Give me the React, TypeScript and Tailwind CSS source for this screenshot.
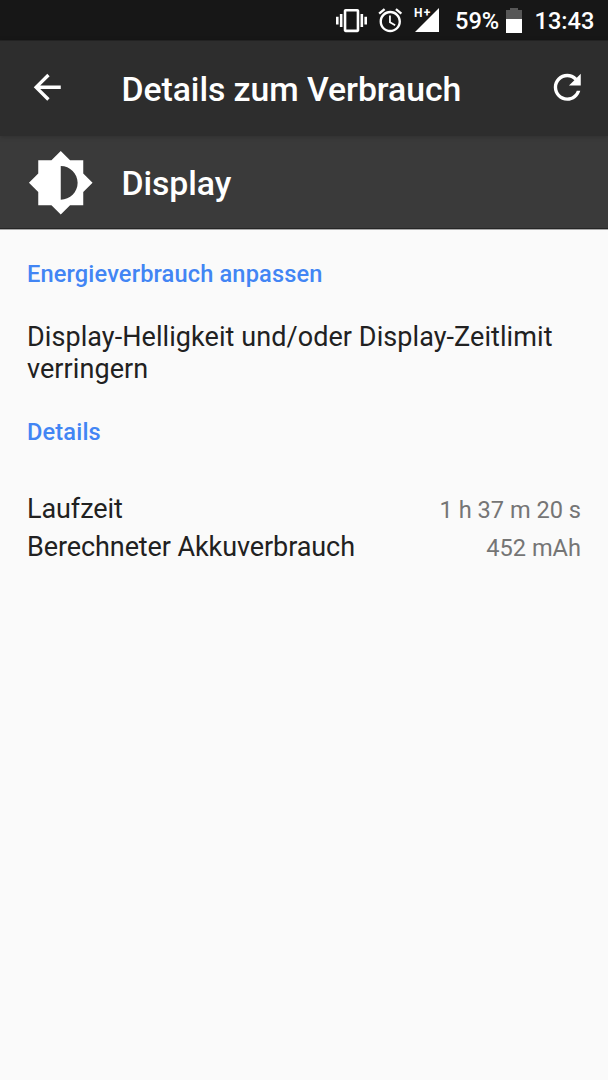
import type { ReactNode } from "react";

type IconProps = {
  path: string;
  className: string;
};

const icons = {
  vibration:
    "M0 15h2V9H0v6zm3 2h2V7H3v10zm19-8v6h2V9h-2zm-3 8h2V7h-2v10zM16.5 3h-9C6.67 3 6 3.67 6 4.5v15c0 .83.67 1.5 1.5 1.5h9c.83 0 1.5-.67 1.5-1.5v-15c0-.83-.67-1.5-1.5-1.5zM16 19H8V5h8v14z",
  alarm:
    "M22 5.72l-4.6-3.86-1.29 1.53 4.6 3.86L22 5.72zM7.88 3.39L6.6 1.86 2 5.71l1.29 1.53 4.59-3.85zM12.5 8H11v6l4.75 2.85.75-1.23-4-2.37V8zM12 4c-4.97 0-9 4.03-9 9s4.02 9 9 9c4.97 0 9-4.03 9-9s-4.03-9-9-9zm0 16c-3.87 0-7-3.13-7-7s3.13-7 7-7 7 3.13 7 7-3.13 7-7 7z",
  back: "M20 11H7.83l5.59-5.59L12 4l-8 8 8 8 1.41-1.41L7.83 13H20v-2z",
  refresh:
    "M17.65 6.35C16.2 4.9 14.21 4 12 4c-4.42 0-7.99 3.58-7.99 8s3.57 8 7.99 8c3.73 0 6.84-2.55 7.73-6h-2.08c-.82 2.33-3.04 4-5.65 4-3.31 0-6-2.69-6-6s2.69-6 6-6c1.66 0 3.14.69 4.22 1.78L13 11h7V4l-2.35 2.35z",
  brightness:
    "M20 15.31L23.31 12 20 8.69V4h-4.69L12 .69 8.69 4H4v4.69L.69 12 4 15.31V20h4.69L12 23.31 15.31 20H20v-4.69zM12 18V6c3.31 0 6 2.69 6 6s-2.69 6-6 6z",
};

const Icon = ({ path, className }: IconProps) => (
  <svg viewBox="0 0 24 24" fill="currentColor" className={className}>
    <path d={path} />
  </svg>
);

const StatusBar = () => (
  <div className="flex h-10 shrink-0 items-center bg-[#171717] pl-[336px] text-[23.6px] font-medium leading-10 text-white">
    <Icon path={icons.vibration} className="h-[31px] w-[31px] shrink-0" />
    <Icon path={icons.alarm} className="ml-[8.5px] h-[28.5px] w-[28.5px] shrink-0" />
    <div className="relative ml-[11px] h-6 w-6 shrink-0">
      <svg viewBox="0 0 24 24" className="h-6 w-6">
        <path d="M24 0V24H0Z" fill="#fff" />
      </svg>
      <span className="absolute -left-px -top-[2px] text-[12px] font-bold leading-[14px] tracking-[1.2px]">
        H+
      </span>
    </div>
    <span className="ml-4 w-[51px] shrink-0 pt-[2px]">59%</span>
    <svg viewBox="0 0 16 25" className="mt-px h-[25px] w-4 shrink-0">
      <path d="M4 0H12V2H16V11H0V2H4Z" fill="#575757" />
      <path d="M0 11H16V25H0Z" fill="#fff" />
    </svg>
    <span className="ml-[12.5px] shrink-0 pt-[2px]">13:43</span>
  </div>
);

const Category = ({ children }: { children: ReactNode }) => (
  <h2 className="text-[23.6px] font-medium leading-7 tracking-[0.15px] text-[#4285f4]">
    {children}
  </h2>
);

const details = [
  { label: "Laufzeit", value: "1 h 37 m 20 s" },
  { label: "Berechneter Akkuverbrauch", value: "452 mAh" },
];

const App = () => {
  return (
    <div className="flex h-[1080px] w-[608px] flex-col overflow-hidden bg-[#fafafa] font-['Roboto',sans-serif]">
      <StatusBar />
      <header className="z-10 flex h-24 shrink-0 items-center border-t border-[#222222] bg-[#2d2d2d] pb-[2px] pl-[27px] pr-[20.5px] text-white shadow-[0_1px_5px_rgba(0,0,0,0.2)]">
        <Icon path={icons.back} className="h-[40.5px] w-[40.5px]" />
        <h1 className="ml-[54px] flex-1 pt-[4px] text-[33.8px] font-medium leading-10 tracking-[-0.07px]">
          Details zum Verbrauch
        </h1>
        <Icon path={icons.refresh} className="h-[40.5px] w-[40.5px]" />
      </header>
      <section className="flex h-[93px] shrink-0 items-center border-b border-[#252525] bg-[#3a3a3a] pl-[27px] text-white">
        <Icon path={icons.brightness} className="mt-px h-[67.5px] w-[67.5px]" />
        <span className="ml-[27px] pt-[3px] text-[33.8px] font-medium leading-10 tracking-[-0.07px]">
          Display
        </span>
      </section>
      <main className="border-t border-[#a8a8a8] px-[27px] pt-[30px]">
        <Category>Energieverbrauch anpassen</Category>
        <p className="mt-[33px] text-[27px] leading-8 tracking-[0.07px] text-[#212121]">
          Display-Helligkeit und/oder Display-Zeitlimit verringern
        </p>
        <div className="mt-[33px]">
          <Category>Details</Category>
        </div>
        <dl className="mt-11">
          {details.map(({ label, value }) => (
            <div
              key={label}
              className="flex h-[38px] items-baseline justify-between leading-[38px]"
            >
              <dt className="text-[27px] tracking-[-0.09px] text-[#212121]">
                {label}
              </dt>
              <dd className="text-[23.6px] text-[#757575]">{value}</dd>
            </div>
          ))}
        </dl>
      </main>
    </div>
  );
};

export default App;
